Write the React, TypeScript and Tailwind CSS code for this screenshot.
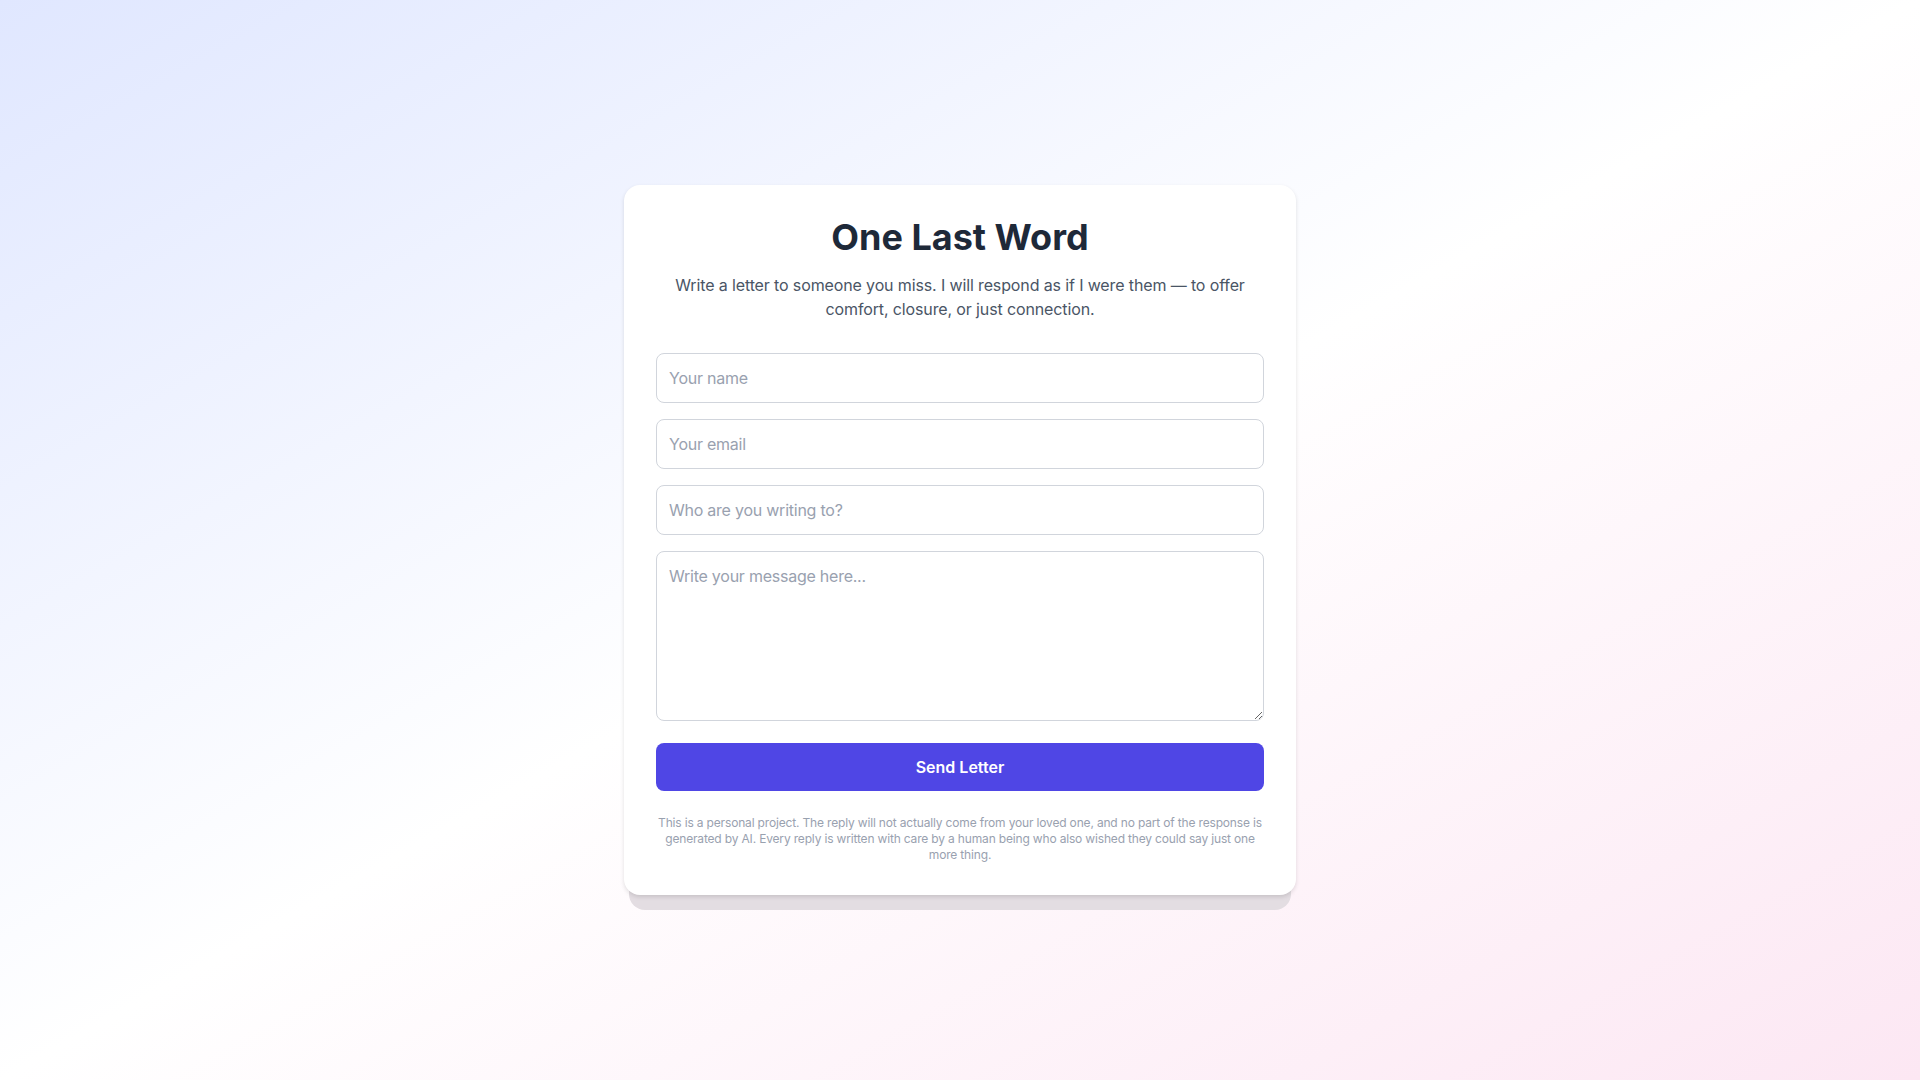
import { useState } from "react";

export default function App() {
  const [name, setName] = useState("");
  const [email, setEmail] = useState("");
  const [to, setTo] = useState("");
  const [message, setMessage] = useState("");

  const field =
    "w-full rounded-lg border border-gray-300 bg-white px-3 py-3 text-base leading-6 tracking-[-0.015em] text-gray-800 placeholder:text-gray-400 outline-none focus:border-indigo-500";

  return (
    <div
      className="flex min-h-screen items-center justify-center bg-gradient-to-br from-[#e0e7ff] via-white to-[#fce7f3] px-4"
      style={{ fontFamily: "Inter, 'Noto Sans', sans-serif" }}
    >
      <div className="relative w-full max-w-2xl">
        {/* paper behind the card */}
        <div className="absolute inset-x-[5px] -bottom-[15px] h-16 rounded-b-2xl bg-[#e3dde2]" />

        <div className="relative rounded-2xl bg-white p-8 shadow-[0_2px_4px_rgba(0,0,0,0.12)]">
          <h1 className="text-center text-4xl leading-10 font-bold text-gray-800">
            One Last Word
          </h1>
          <p className="mt-4 text-center text-base leading-6 tracking-[-0.008em] text-gray-600">
            Write a letter to someone you miss. I will respond as if I were them
            — to offer comfort, closure, or just connection.
          </p>

          <form
            className="mt-8 flex flex-col gap-4"
            onSubmit={(e) => e.preventDefault()}
          >
            <input
              className={field}
              placeholder="Your name"
              value={name}
              onChange={(e) => setName(e.target.value)}
            />
            <input
              className={field}
              type="email"
              placeholder="Your email"
              value={email}
              onChange={(e) => setEmail(e.target.value)}
            />
            <input
              className={field}
              placeholder="Who are you writing to?"
              value={to}
              onChange={(e) => setTo(e.target.value)}
            />
            <textarea
              className={field + " block"}
              rows={6}
              placeholder="Write your message here..."
              value={message}
              onChange={(e) => setMessage(e.target.value)}
            />
            <button
              type="submit"
              className="mt-1.5 h-12 w-full rounded-lg bg-[#4f46e5] text-base font-semibold text-white hover:bg-indigo-700"
            >
              Send Letter
            </button>
          </form>

          <p className="mt-6 text-center text-xs leading-4 tracking-[-0.014em] text-gray-400">
            This is a personal project. The reply will not actually come from
            your loved one, and no part of the response is generated by AI.
            Every reply is written with care by a human being who also wished
            they could say just one more thing.
          </p>
        </div>
      </div>
    </div>
  );
}
